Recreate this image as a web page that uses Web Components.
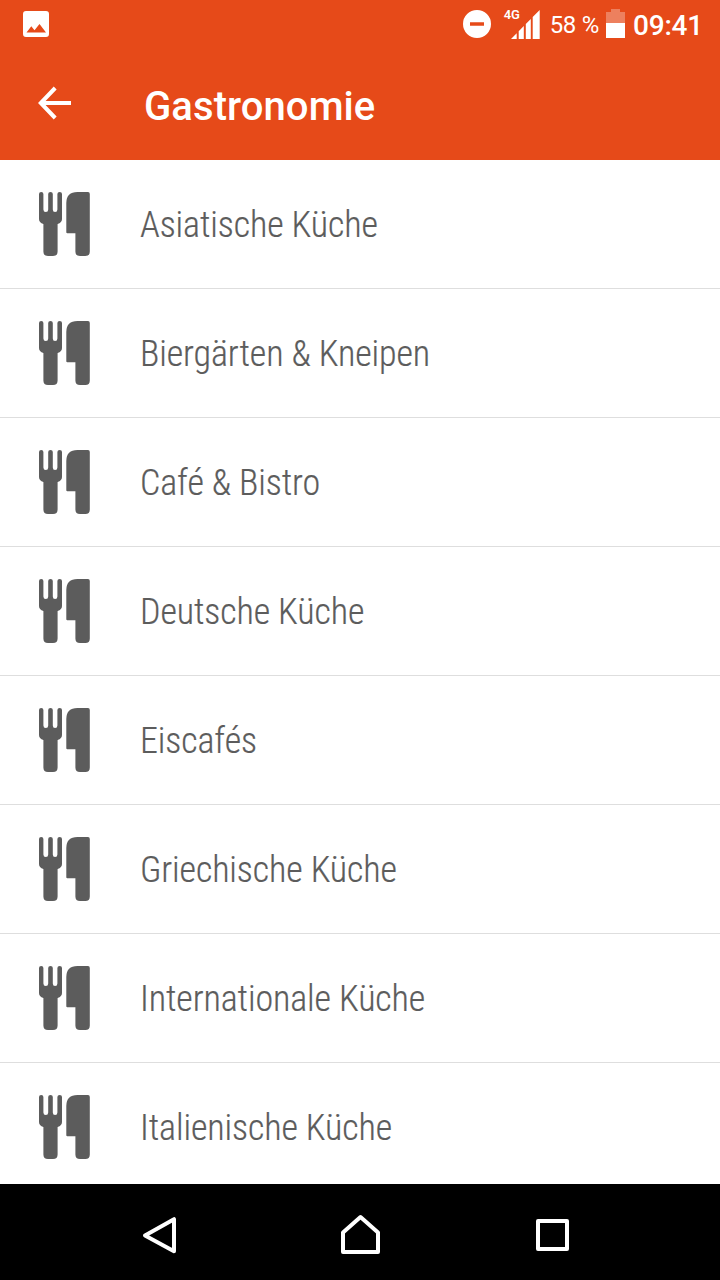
<!DOCTYPE html>
<html lang="de">
<head>
<meta charset="utf-8">
<meta name="viewport" content="width=device-width, initial-scale=1">
<title>Gastronomie</title>
<style>
    html {
        --primary: #e64a19;
        --text: #5c5c5c;
        --divider: #dedede;
    }

    body {
        margin: 0;
        overflow: hidden;
        font-family: Roboto, "Liberation Sans", sans-serif;
    }
</style>
</head>
<body>
<category-screen></category-screen>

<template id="status-bar">
    <style>
        :host {
            display: flex;
            align-items: center;
            box-sizing: border-box;
            height: 48px;
            padding: 0 17px 0 23px;
            background: var(--primary);
            color: #fff;
        }

        svg { display: block; flex: none; }
        .spacer { flex: 1; }
        .battery-level { font-size: 24px; line-height: 48px; margin: 2px 0 0 10px; letter-spacing: -.3px; white-space: nowrap; }
        .battery { margin: -1px 0 0 7px; }
        .clock { font-size: 28px; font-weight: 500; line-height: 48px; margin: 4px 0 0 8px; letter-spacing: -.2px; }
        .network { display: flex; margin: 1px 0 0 13px; }
        .network span { font-size: 13px; font-weight: 600; line-height: 13px; width: 7px; margin-top: -2px; }
    </style>
    <svg width="26" height="26" viewBox="0 0 26 26">
        <path fill="#fff" fill-rule="evenodd" d="M3 0H23Q26 0 26 3V23Q26 26 23 26H3Q0 26 0 23V3Q0 0 3 0ZM3.5 21.5H23L16.5 13L11.5 19.3L8.3 15.2Z"/>
    </svg>
    <div class="spacer"></div>
    <svg width="28" height="28" viewBox="0 0 28 28">
        <path fill="#fff" fill-rule="evenodd" d="M14 0a14 14 0 1 1 0 28a14 14 0 1 1 0-28ZM7 12.3V15.7H21V12.3Z"/>
    </svg>
    <div class="network">
        <span>4G</span>
        <svg width="29" height="29" viewBox="0 0 29 29">
            <path fill="#fff" d="M0 29L5.7 23.2V29ZM7.7 29V21.2L12.8 16V29ZM14.8 29V14L19.8 9V29ZM21.7 29V7L28.7 0V29Z"/>
        </svg>
    </div>
    <span class="battery-level">58 %</span>
    <svg class="battery" width="19" height="29" viewBox="0 0 19 29">
        <path fill="#fff" fill-opacity=".3" d="M5 0H14V3H19V14H0V3H5Z"/>
        <path fill="#fff" d="M0 14H19V29H0Z"/>
    </svg>
    <span class="clock">09:41</span>
</template>

<template id="app-bar">
    <style>
        :host {
            display: flex;
            align-items: center;
            height: 112px;
            padding-left: 38px;
            background: var(--primary);
            color: #fff;
        }

        svg { display: block; flex: none; margin-top: -2px; }
        h1 { margin: 6px 0 0 73px; font-size: 40px; font-weight: 500; line-height: 48px; letter-spacing: .08px; }
    </style>
    <svg width="33" height="34" viewBox="0 0 33 34">
        <path fill="none" stroke="#fff" stroke-width="4" d="M17.2 2L2.8 17L17.2 32M3 17H33"/>
    </svg>
    <h1><slot></slot></h1>
</template>

<template id="category-item">
    <style>
        :host {
            display: flex;
            align-items: center;
            flex: none;
            height: 128px;
            padding-left: 39px;
            border-bottom: 1px solid var(--divider);
            color: var(--text);
        }

        svg { display: block; flex: none; }

        .label {
            margin: 2px 0 0 50px;
            font: 300 36px/48px "Roboto Condensed", Roboto, sans-serif;
            font-stretch: 75%;
            letter-spacing: -.11px;
            -webkit-text-stroke: .2px;
            white-space: nowrap;
        }
    </style>
    <svg width="51" height="64" viewBox="0 0 51 64">
        <path fill="currentColor" d="M0 2Q0 0 2.2 0T4.4 2V17.5Q4.4 20 6.8 20T9.2 17.5V2Q9.2 0 11.5 0T13.8 2V17.5Q13.8 20 16.1 20T18.4 17.5V2Q18.4 0 20.7 0T23 2V27Q23 30.5 18.6 32V59.5Q18.6 64 14 64H9Q4.4 64 4.4 59.5V32Q0 30.5 0 27Z"/>
        <path fill="currentColor" d="M27.3 11Q27.3 0 38.5 0H49Q50.8 0 50.8 2V59.5Q50.8 64 46.3 64H41Q36.4 64 36.4 59.5V41.3H28.3Q27.3 41.3 27.3 40.3Z"/>
    </svg>
    <span class="label"><slot></slot></span>
</template>

<template id="nav-bar">
    <style>
        :host {
            display: flex;
            align-items: center;
            box-sizing: border-box;
            height: 96px;
            padding: 6px 0 0 142px;
            background: #000;
        }

        svg { display: block; }
        .home { margin: -2px 155px 0 163px; }
        path { fill: none; stroke: #fff; stroke-width: 4; stroke-linejoin: round; }
    </style>
    <svg width="36" height="38" viewBox="0 0 36 38"><path d="M32 3.2V35.2L3 19.4Z"/></svg>
    <svg class="home" width="40" height="40" viewBox="0 0 40 40"><path d="M2 18.5L19.5 3L37 18.5V38H2Z"/></svg>
    <svg class="recent" width="34" height="34" viewBox="0 0 34 34"><path d="M2 3H31V31H2Z"/></svg>
</template>

<template id="category-screen">
    <style>
        :host { display: flex; flex-direction: column; height: 1280px; background: #fff; }
        main { display: flex; flex-direction: column; flex: 1; min-height: 0; overflow: hidden; }
        status-bar, app-bar, nav-bar { flex: none; }
    </style>
    <status-bar></status-bar>
    <app-bar>Gastronomie</app-bar>
    <main>
        <category-item>Asiatische Küche</category-item>
        <category-item>Biergärten &amp; Kneipen</category-item>
        <category-item>Café &amp; Bistro</category-item>
        <category-item>Deutsche Küche</category-item>
        <category-item>Eiscafés</category-item>
        <category-item>Griechische Küche</category-item>
        <category-item>Internationale Küche</category-item>
        <category-item>Italienische Küche</category-item>
    </main>
    <nav-bar></nav-bar>
</template>

<script>
class TemplateElement extends HTMLElement {
    connectedCallback() {
        if (!this.shadowRoot) {
            const template = document.getElementById(this.localName);
            this.attachShadow({mode: 'open'});
            this.shadowRoot.appendChild(template.content.cloneNode(true));
        }
    }
}

class StatusBar extends TemplateElement {}
class AppBar extends TemplateElement {}
class CategoryItem extends TemplateElement {}
class NavBar extends TemplateElement {}
class CategoryScreen extends TemplateElement {}

customElements.define('status-bar', StatusBar);
customElements.define('app-bar', AppBar);
customElements.define('category-item', CategoryItem);
customElements.define('nav-bar', NavBar);
customElements.define('category-screen', CategoryScreen);
</script>
</body>
</html>
